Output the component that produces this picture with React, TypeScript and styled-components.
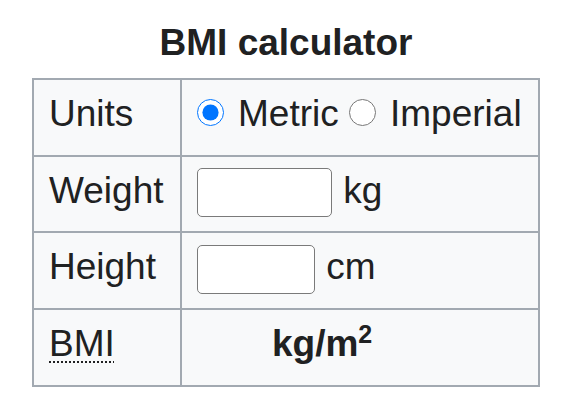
import React, { useState } from 'react'
import styled, { createGlobalStyle } from 'styled-components'

const GlobalStyle = createGlobalStyle`
  html, body {
    margin: 0;
    padding: 0;
    background: #fff;
  }
  body {
    font-family: "Liberation Sans", Arial, sans-serif;
    color: #202122;
  }
`

const Page = styled.div`
  padding: 13px 0 0 32px;
`

const Calculator = styled.table`
  border-collapse: collapse;
  background: #f8f9fa;
  border: 2px solid #a2a9b1;
  font-size: 37px;
  line-height: 1.6;
  color: #202122;
`

const Caption = styled.caption`
  font-weight: bold;
  padding: 0 0 6px;
  line-height: 59px;
`

const Cell = styled.td<{ $label?: boolean }>`
  border: 2px solid #a2a9b1;
  padding: 4px 15px 11.5px;
  vertical-align: middle;
  white-space: nowrap;
  width: ${(p) => (p.$label ? '116px' : '326px')};
`

const Radio = styled.input.attrs({ type: 'radio' })`
  width: 27px;
  height: 27px;
  margin: 0 14px 0 0;
  vertical-align: 0;
`

const Field = styled.input.attrs({ type: 'text' })<{ $w: number }>`
  box-sizing: border-box;
  width: ${(p) => p.$w}px;
  height: 49px;
  margin: 0 1px 0 0;
  border: 1.5px solid #7a7a7a;
  border-radius: 5px;
  background: #fff;
  vertical-align: middle;
  font-size: 20px;
`

const Abbr = styled.abbr`
  text-decoration: underline dotted;
  text-decoration-thickness: 2px;
  text-underline-offset: 5px;
  cursor: help;
`

const Result = styled.b`
  display: inline-block;
  padding-left: 75px;
`

const Sup = styled.sup`
  font-size: 25px;
  line-height: 0;
  vertical-align: 13px;
`

export default function App() {
  const [units, setUnits] = useState('metric')
  const metric = units === 'metric'

  return (
    <>
      <GlobalStyle />
      <Page>
        <Calculator>
          <Caption>BMI calculator</Caption>
          <tbody>
            <tr>
              <Cell $label>Units</Cell>
              <Cell>
                <label>
                  <Radio name="units" checked={metric} onChange={() => setUnits('metric')} />
                  Metric
                </label>{' '}
                <label>
                  <Radio name="units" checked={!metric} onChange={() => setUnits('imperial')} />
                  Imperial
                </label>
              </Cell>
            </tr>
            <tr>
              <Cell $label>Weight</Cell>
              <Cell>
                <Field $w={135} /> {metric ? 'kg' : 'lb'}
              </Cell>
            </tr>
            <tr>
              <Cell $label>Height</Cell>
              <Cell>
                <Field $w={118} /> {metric ? 'cm' : 'in'}
              </Cell>
            </tr>
            <tr>
              <Cell $label>
                <Abbr title="Body mass index">BMI</Abbr>
              </Cell>
              <Cell>
                <Result>
                  kg/m<Sup>2</Sup>
                </Result>
              </Cell>
            </tr>
          </tbody>
        </Calculator>
      </Page>
    </>
  )
}
